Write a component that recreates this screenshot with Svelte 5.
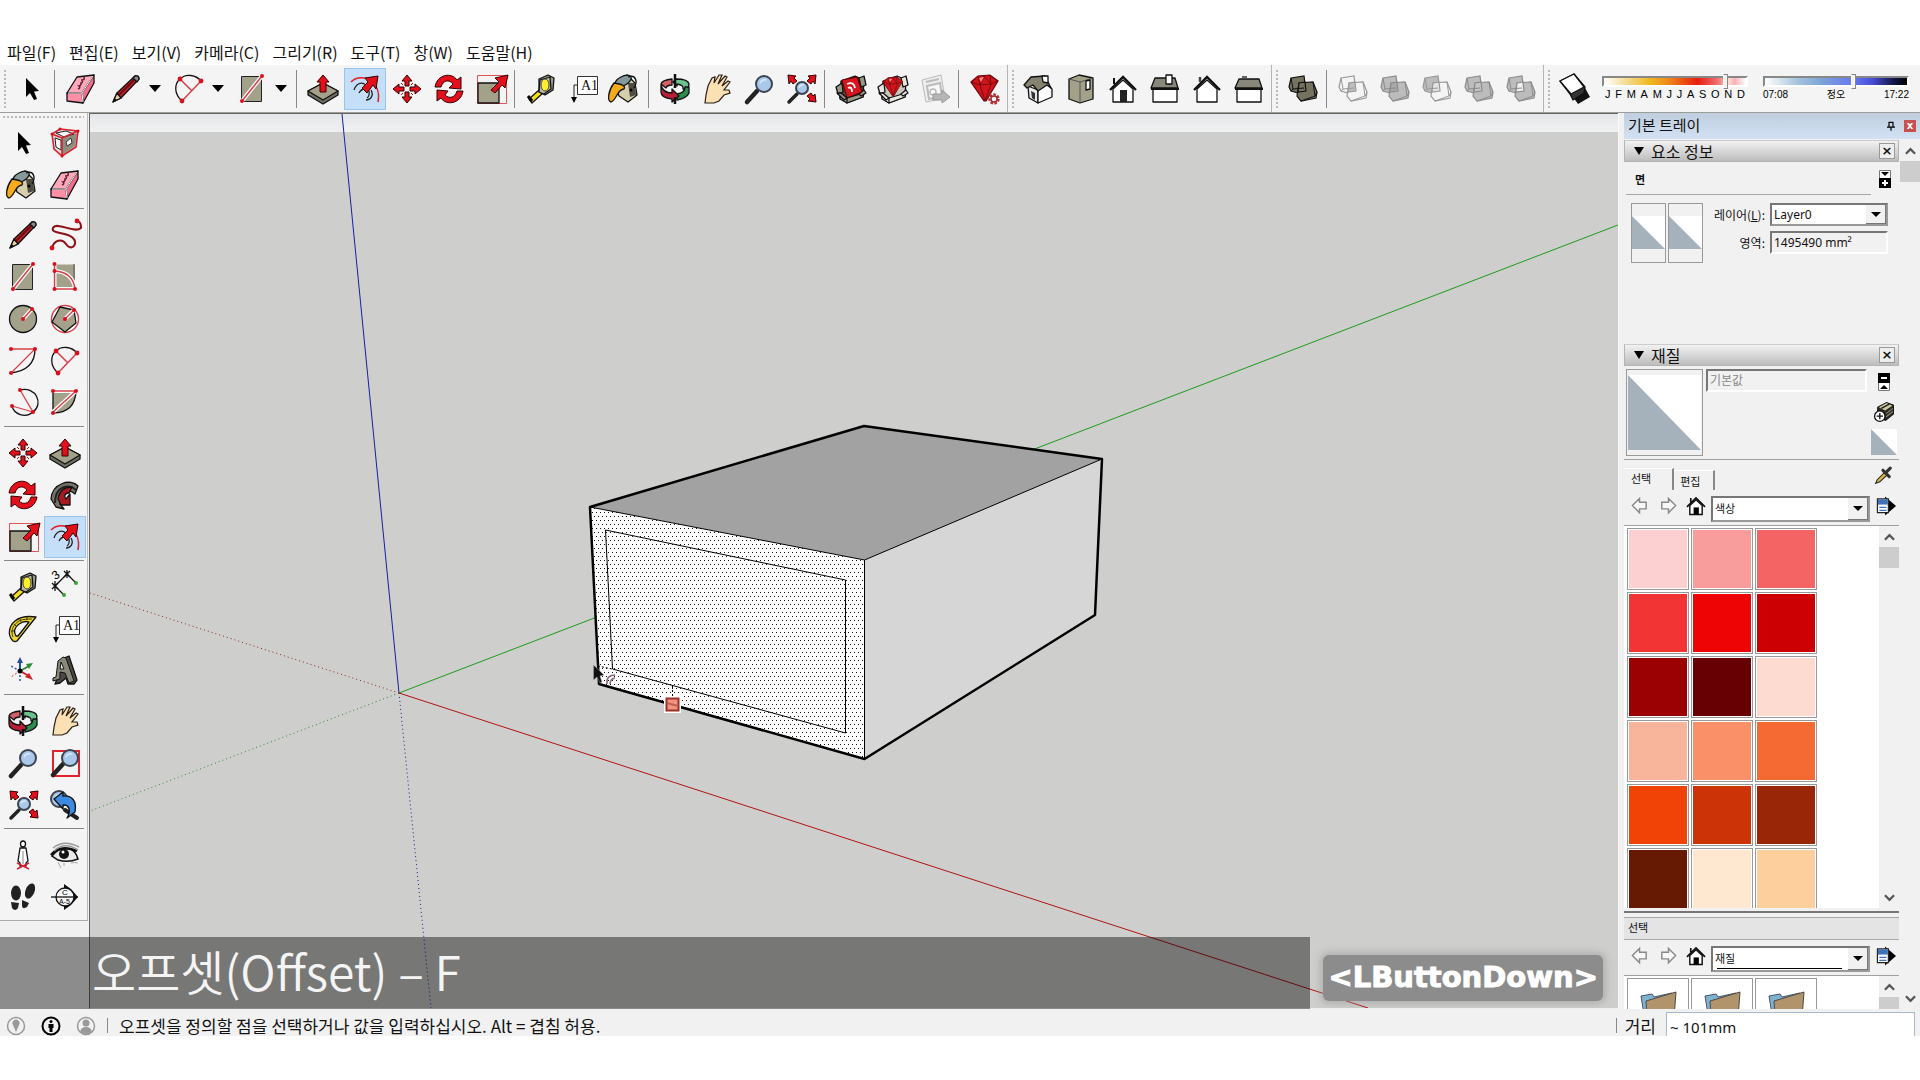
<script>
  const dot = (x, y, r = 2) => `<circle cx="${x}" cy="${y}" r="${r}" fill="#d8101c"/>`;
  const redLine = (d) =>
    `<path d="${d}" fill="none" stroke="#fff" stroke-width="4"/><path d="${d}" fill="none" stroke="#d8404a" stroke-width="1.5"/>`;
  const lens = (x, y, r) =>
    `<circle cx="${x}" cy="${y}" r="${r}" fill="#a9c8ea" stroke="#3c4450" stroke-width="2"/><path d="M${x - r * 0.5} ${y - r * 0.1}Q${x - r * 0.3} ${y - r * 0.6} ${x + r * 0.3} ${y - r * 0.5}" stroke="#dcebfa" stroke-width="1.5" fill="none"/>`;
  const red = 'fill="#e3101c" stroke="#300" stroke-width="1"';
  const ink = 'stroke="#111" stroke-width="1.3" stroke-linejoin="round"';
  const tan = 'fill="#a3a18a"';
  const bigArrow = 'M21 22L29 14L25 10L38 7L35 20L32 17L25 25Z';
  const handShape =
    'M9 35L10 27L12 18L16 10L19 9L18 15L23 7L26 7L22 16L29 8L31 9L26 18L32 13L34 14L28 22L33 22L34 25L28 27L23 33L18 35Z';
  const crate = (inside, body, shade) =>
    `<path d="M11 13L25 8L34 12L33 29L17 35L10 30Z" fill="${shade}" ${ink}/><path d="M6 19L12 15L13 24L8 26ZM29 10L34 8L36 17L31 19Z" fill="${body}" ${ink}/>${inside}<path d="M10 27L17 30L34 25L33 29L17 35L10 31Z" fill="${body}" ${ink}/><path d="M17 30V35" ${ink}/><path d="M7 25L11 25L17 30L14 32ZM34 22L36 25L31 28L29 26Z" fill="${body}" ${ink}/>`;
  const gem = (dx, dy, s) =>
    `<g transform="translate(${dx} ${dy}) scale(${s})"><path d="M7 14L14 8L26 7L34 13L22 33L20 33Z" fill="#d0141c" stroke="#6a0508" stroke-width="1.2"/><path d="M7 14L16 17L27 16L34 13M16 17L21 33L27 16L20 8L16 17M14 8L16 17M26 7L27 16" stroke="#7a0a0d" fill="none"/><path d="M15 10L20 9L17 14Z" fill="#ff8a8a"/></g>`;
  const solids = (a, b, mid, line) =>
    `<path d="M9 10L22 8L24 23L20 26L9 23L7 19Z" fill="${a}" stroke="${line}" stroke-width="1.2"/><path d="M17 15L31 14L35 24L34 30L19 33L15 28Z" fill="${b}" stroke="${line}" stroke-width="1.2"/><path d="M17 15L23 14L24 23L16 24Z" fill="${mid}" stroke="${line}" stroke-width="1.2"/><path d="M31 14L33 28L19 33M33 28L35 24M9 10L11 21L22 20M11 21L9 23" fill="none" stroke="${line}"/>`;
  const house = (extra) =>
    `<path d="M11 21L21 12L31 21V34H11Z" fill="#fff" ${ink}/><path d="M8 22L21 9L34 22" fill="none" stroke="#111" stroke-width="2.4"/>${extra}`;

  const icons = {
    select: '<path d="M16 10V29L20 25L24 32L27 31L24 23.500L29 23Z" fill="#000"/>',
    component: `<path d="M8 12L16 7L34 9L32 25L18 34L10 27Z" fill="#ddd"/><path d="M18 16L33 11L31 24L18 33Z" fill="#8f8e7e"/><path d="M12 11L22 9L30 12L20 15Z" fill="#fff" stroke="#222"/><path d="M11 16L17 18V28L12 25Z" fill="#fff" stroke="#222"/><path d="M22 20L27 16L28 21L23 24Z" fill="#fff" stroke="#333"/><path d="M8 12L16 7L34 9L32 25L18 34L10 27ZM8 12L18 16L34 9M18 16V34" fill="none" stroke="#d8202c" stroke-width="1.600"/>${dot(8, 12, 1.5)}${dot(34, 9, 1.5)}${dot(18, 34, 1.5)}${dot(16, 7, 1.5)}`,
    paint: `<path d="M11 15L23 7L31 15L33 27L24 34L15 28Z" fill="#d6cfae" ${ink}/><path d="M24 15L31 15L32 27L26 29Z" fill="#4e4b42"/><ellipse cx="19" cy="13" rx="9" ry="4.500" transform="rotate(-28 19 13)" fill="#87989c" ${ink}/><path d="M24 9C32 6 34 14 30 20" fill="none" ${ink}/><path d="M10 15C18 16 22 18 20 21C13 21 13 32 7 34C3 33 4 23 10 15Z" fill="#f5ab1b" ${ink}/><circle cx="27" cy="22" r="1.500" fill="#000"/>`,
    eraser: `<path d="M7 25L17 9L34 7L22 25Z" fill="#ffa9bb" ${ink}/><path d="M22 25L34 7V15L23 35Z" fill="#f06d8b" ${ink}/><path d="M7 25L22 25L23 35L7 33Z" fill="#ff8fa6" ${ink}/><path d="M8 25H22L33 8M22 25L23 34" stroke="#fff" fill="none"/><path d="M18 21q3-1 1-3q2 0 2-3q2 0 1-3q3 0 2-3" stroke="#5f2633" stroke-width="1.600" fill="none"/>`,
    pencil: `<path d="M8 34L12 25L30 8Q34 7 34 11L16 30Z" fill="#c2242a" ${ink}/><path d="M14 27L31 10" stroke="#6e0d12" stroke-width="2"/><path d="M8 34L12 25L16 30Z" fill="#e9d3a2" ${ink}/><path d="M8 34L9.500 30L12 32Z" fill="#111"/><path d="M28 10L30 8Q34 7 34 11L32 14Z" fill="#888" ${ink}/>`,
    freehand: `<path d="M8 34C10 26 18 24 22 30C27 38 35 30 29 24C24 18 6 20 9 14C13 7 30 20 37 14C37 9 36 8 33 7" fill="none" stroke="#8e1118" stroke-width="2"/>${dot(8, 34, 2.4)}${dot(33, 7, 2.4)}`,
    rect: `<path d="M10.500 8.500H30.500V33.500H10.500Z" ${tan} stroke="#222"/>${redLine('M11 33L31 8')}${dot(11, 33)}${dot(31, 8)}`,
    rotrect: `<path d="M10.500 8.500H31V33H10.500Z" ${tan}/><path d="M30 8V28" stroke="#555"/>${redLine('M10.500 8V33H31Q29 16 10.500 15')}${dot(10.5, 8)}${dot(10.5, 15)}${dot(10.5, 33)}${dot(31, 33)}`,
    circle: `<circle cx="21" cy="21" r="13.500" ${tan} ${ink}/>${redLine('M21 21L30 11')}${dot(21, 21)}${dot(30, 11)}`,
    polygon: `<circle cx="21" cy="21" r="13.500" fill="#fff" stroke="#d84048" stroke-width="1.400"/><path d="M16 9L30 12L32 25L21 34L8 24Z" ${tan} ${ink}/>${redLine('M21 21L30 12')}${dot(21, 21)}${dot(30, 12)}`,
    arc1: `<path d="M33 9Q33 30 9 33" fill="none" ${ink}/><path d="M9 9H33L9 33" fill="none" stroke="#d8404a" stroke-width="1.300"/>${dot(9, 9)}${dot(33, 9)}${dot(9, 33)}`,
    arc2: `<path d="M14 33C6 26 6 16 12 11C18 5 28 7 33 13" fill="none" ${ink}/><path d="M14 33L33 13M12 11L24 23" stroke="#d8404a" stroke-width="1.500"/>${dot(14, 33, 2.4)}${dot(12, 11, 2.4)}${dot(33, 13, 2.4)}`,
    arc3: `<path d="M18 8C34 4 42 22 31 30C23 37 12 32 10 24" fill="none" ${ink}/><path d="M18 8L31 30L10 24" fill="none" stroke="#d8404a" stroke-width="1.300"/>${dot(18, 8)}${dot(10, 24)}${dot(31, 30)}`,
    pie: `<path d="M9 9H32Q31 31 9 31Z" ${tan} ${ink}/>${redLine('M9 9H32L9 30')}${dot(9, 9)}${dot(32, 9)}${dot(9, 31)}`,
    move: `<path d="M21 7L26 13H23V18H19V13H16ZM21 35L26 29H23V24H19V29H16ZM7 21L13 16V19H18V23H13V26ZM35 21L29 16V19H24V23H29V26Z" ${red}/><path d="M17 17L15 15M25 17L27 15M17 25L15 27M25 25L27 27" stroke="#d00"/>`,
    push: `<path d="M6 23L21 15L36 23V27L21 36L6 27Z" fill="#6f6e60" ${ink}/><path d="M6 23L21 15L36 23L21 32Z" ${tan} ${ink}/><path d="M21 7L27 14H24V24H18V14H15Z" ${red}/>`,
    rotate: `<path d="M7 19C9 6 24 4 29 12L33 9V21L21 20L25 16C21 11 15 12 13 19Z" ${red}/><path d="M35 23C33 36 18 38 13 30L9 33V22L20 23L17 27C21 31 27 30 29 23Z" ${red}/>`,
    follow: `<path d="M7 25C8 9 27 4 34 12L31 20C25 14 17 18 16 30L20 35L12 33Z" fill="#77756a" ${ink}/><path d="M11 29C11 12 25 9 32 16" stroke="#222" stroke-width="2" fill="none"/><path d="M14 25C16 13 25 13 28 13L25 19C20 19 20 23 22 25L26 20V31H17Z" fill="#a91a20" ${ink}/>`,
    scale: `<path d="M7.500 7.500H36.500V35.500H7.500Z" fill="none" stroke="#e0555c"/><path d="M8 15H29V35H8Z" ${tan} ${ink}/><path d="${bigArrow}" ${red}/>`,
    offset: `<path d="M7 14C17 4 38 12 34 34" fill="none" stroke="#e2202c" stroke-width="1.600"/><path d="M10 22C12 16 17 13 22 17M27 22C30 27 27 32 22 32M15 25Q17 21 21 21M25 23Q26 28 23 30" fill="none" stroke="#222" stroke-width="1.300"/><path d="M18 20L24 14L21 10L34 8L32 21L29 17L23 25Z" ${red}/>`,
    tape: `<path d="M9 31L19 22L23 25L12 35Z" fill="#f2df1c" ${ink}/><path d="M8 28L12 33" stroke="#000" stroke-width="3"/><path d="M19 11L28 7L34 10L33 22L25 27L19 24Z" fill="#9b9b8b" ${ink}/><path d="M20 12L30 9L31 21L24 26L19 24Z" fill="#b8b8aa" ${ink}/><ellipse cx="25" cy="17" rx="4" ry="6" fill="#ffef2c" stroke="#444"/>`,
    dimension: `<path d="M11 20L23 8M11 20L20 29M23 8L32 17" ${ink}/><path d="M8 17L14 23M8 23L14 17M11 15V25M20 5L26 11M20 11L26 5M23 4V12" ${ink}/><circle cx="20" cy="29" r="2" fill="#39a33c"/><circle cx="32" cy="17" r="2" fill="#39a33c"/><text x="9" y="13" transform="rotate(-35 12 10)" font-family="Liberation Sans" font-size="12">3</text>`,
    protractor: `<path d="M11 33C5 27 7 18 13 13C19 8 27 8 34 9L15 33Q13 34 11 33Z" fill="#f0d92a" ${ink}/><path d="M14 28C11 23 13 19 17 16C20 14 24 13 27 14L16 28Z" fill="#f4f4f4" ${ink}/><path d="M11 29C8 22 12 16 17 13C21 11 26 11 30 11M9 23L12 23M12 16L14 18M18 11L19 14M25 9L25 12" fill="none" stroke="#443c00"/>`,
    text: `<path d="M15.500 8.500H35.500V26.500H15.500Z" fill="#fff" stroke="#333"/><text x="19" y="22" font-family="Liberation Serif" font-size="14" fill="#111">A1</text><path d="M15 17H12V32" fill="none" stroke="#222"/><path d="M9 29H15L12 35Z" fill="#000"/>`,
    axes: `<path d="M18 21V33M18 21L9 16" stroke="#3157a0" stroke-dasharray="2 2" stroke-width="1.500"/><path d="M18 21L9 27" stroke="#c33" stroke-dasharray="2 2"/><path d="M18 21V12" stroke="#234f9c" stroke-width="2"/><path d="M15 13L18 7L21 13Z" fill="#234f9c"/><path d="M18 21L27 16" stroke="#2f8c38" stroke-width="2"/><path d="M24 14L31 13L27 19Z" fill="#2f8c38"/><path d="M18 21L27 26" stroke="#d31c24" stroke-width="2"/><path d="M27 23L31 30L23 27Z" fill="#d31c24"/><circle cx="18" cy="21" r="2.500"/>`,
    text3d: `<path d="M13 29L20 8L25 6L33 30L30 34L24 34L22 28L16 33L11 34Z" fill="#4c4a42" ${ink}/><path d="M9 28L12 27L14 11L19 7L22 8L30 31L25 33L21 23L16 22L16 29L9 31Z" fill="#8a887a" stroke="#111"/><path d="M17 12L16 19L20 19Z" fill="#eee" stroke="#111"/>`,
    orbit: `<path d="M7 16Q8 12 18 11V17Q13 17 12 20Z" fill="#d26068" ${ink}/><path d="M35 16Q34 11 22 11L19 14L23 18V16Q30 17 29 21H34Z" fill="#6cc08b" ${ink}/><path d="M35 19V25Q33 30 23 32V26Q31 25 31 19Z" fill="#2c8d4d" ${ink}/><path d="M7 17Q9 25 18 25V21L25 28L18 34V31Q7 30 7 24Z" fill="#b81e35" ${ink}/><path d="M21 6V20M21 29V36" stroke="#111" stroke-width="2.500"/>`,
    pan: `<path d="${handShape}" fill="#fbe0b4" stroke="#2c2015" stroke-width="1.200"/>`,
    zoom: `<path d="M9 34L19 23" stroke="#222" stroke-width="4.500" stroke-linecap="round"/>${lens(26, 16, 8)}`,
    zoomwin: `<path d="M9 9H35V34H9Z" fill="none" stroke="#e0222c" stroke-width="2"/><path d="M9 33L19 22" stroke="#222" stroke-width="4.500" stroke-linecap="round"/>${lens(26, 16, 8)}`,
    extents: `<path d="M9 34L17 26" stroke="#222" stroke-width="3.500" stroke-linecap="round"/>${lens(22, 20, 6)}<path d="M8 7L16 8L14 10L17 13L13 16L11 13L9 16ZM36 7L28 8L30 10L27 13L31 16L33 13L35 16ZM36 34L28 33L30 31L27 28L31 25L33 28L35 26Z" ${red}/>`,
    previous: `${lens(15, 15, 8)}<path d="M21 26L33 34" stroke="#222" stroke-width="4" stroke-linecap="round"/><path d="M10 15L19 8V12C28 11 33 17 31 28L23 34C28 26 24 20 19 21V25Z" fill="#3c8be0" ${ink}/>`,
    position: `<ellipse cx="21" cy="10" rx="2.500" ry="3" fill="#fff" ${ink}/><path d="M18 14H24L26 27L24 29V32H18V29L16 27Z" fill="#fff" ${ink}/><path d="M21 17V30" stroke="#888"/><path d="M15 35L27 29M15 29L27 35" stroke="#d8202c" stroke-width="1.400"/>`,
    look: `<path d="M8 22Q16 12 27 15Q32 18 34 25Q24 29 14 26Z" fill="#e9e9e9" stroke="#111" stroke-width="1.500"/><path d="M7 21Q16 10 33 17" fill="none" stroke="#111" stroke-width="2.500"/><circle cx="20" cy="20" r="5" fill="#111"/><circle cx="19" cy="18" r="1.500" fill="#fff"/><path d="M9 14Q20 5 35 13M10 17Q20 7 34 16" fill="none" stroke="#999" stroke-width="1.500"/><path d="M14 28L17 34M20 29L20 32M27 29Q31 28 34 29" fill="none" stroke="#aaa"/>`,
    walk: `<ellipse cx="14" cy="17" rx="5" ry="7.500" fill="#222"/><path d="M9 26L17 27L16 32Q13 36 10 32Z" fill="#222"/><ellipse cx="28" cy="15" rx="4.500" ry="8" transform="rotate(22 28 15)" fill="#222"/><path d="M20 24L27 27L25 31Q20 34 20 29Z" fill="#222"/>`,
    section: `<path d="M20 8L27 13L34 21L27 29L20 34Z" fill="#111"/><circle cx="21" cy="21" r="9" fill="#f7f7f7" ${ink}/><path d="M7 21H34" ${ink}/><text x="18" y="19" font-family="Liberation Sans" font-size="8">C</text><text x="15" y="28" font-family="Liberation Sans" font-size="7">A-5</text>`,
    warehouse: crate('<path d="M12 12L27 9L32 24L17 30Z" fill="#d8151e" stroke="#600"/><path d="M17 16Q24 13 25 20M18 20Q22 18 22 24" stroke="#fff" stroke-width="1.800" fill="none"/>', '#9a9685', '#4b483d'),
    extwarehouse: crate(gem(6, 4, 0.72), '#e8e6df', '#c9c6bb'),
    sendlayout: `<path d="M8 12L27 7L31 30L12 34Z" fill="#eee" stroke="#bbb"/><path d="M12 14L25 11M13 18L26 15L28 28L15 31Z" stroke="#bbb" stroke-width="2" fill="#f8f8f8"/><circle cx="19" cy="24" r="3" stroke="#bbb" fill="none" stroke-width="1.500"/><path d="M19 26H28V22L36 29L28 35V32H19Z" fill="#b6b6b6" stroke="#999"/>`,
    extmanager: `${gem(0, 0, 1)}<circle cx="30" cy="31" r="4.500" fill="#f4f4f4" stroke="#c22a30" stroke-width="2.500" stroke-dasharray="2.500 1.500"/><circle cx="30" cy="31" r="3" fill="none" stroke="#a8262c" stroke-width="1.500"/>`,
    iso: `<path d="M10 18L20 22V35L11 30Z" fill="#e8e8e8" ${ink}/><path d="M20 22L28 15L34 21V29L20 35Z" fill="#fff" ${ink}/><path d="M6 17L13 9L27 8L33 20L29 17L20 23L15 17L9 20Z" fill="#85836f" ${ink}/><path d="M13 23L17 25V32L14 30Z" fill="#333"/><path d="M24 8H30V15L25 14Z" fill="#fff" ${ink}/>`,
    top: `<path d="M9 11L19 7L33 10V31L20 35L9 31Z" ${tan} ${ink}/><path d="M9 11L20 14L33 10M20 14V35" fill="none" stroke="#555"/><path d="M26 13L30 12V21L26 22Z" fill="#fff" ${ink}/>`,
    front: house('<path d="M18 22H25V34H18Z" fill="#222"/><path d="M12 10V16" stroke="#111" stroke-width="2"/>'),
    right: `<path d="M9 20H33V34H9Z" fill="#fff" ${ink}/><path d="M11 10H31L34 20H7Z" fill="#89877a" ${ink}/><path d="M7 21H35" stroke="#111" stroke-width="2"/><path d="M22 7H28V16H22Z" fill="#fff" ${ink}/>`,
    back: house('<path d="M14 9V14" stroke="#444" stroke-width="2.500"/>'),
    left: `<path d="M9 20H33V34H9Z" fill="#fff" ${ink}/><path d="M11 11H31L34 20H7Z" fill="#89877a" ${ink}/><path d="M7 21H35" stroke="#111" stroke-width="2"/><path d="M14 9H19" stroke="#666" stroke-width="2"/>`,
    outer: solids('#75725f', '#75725f', '#75725f', '#111'),
    intersect: solids('#f4f4f4', '#f4f4f4', '#bdbdbd', '#999'),
    union: solids('#bcbcbc', '#bcbcbc', '#a8a8a8', '#8c8c8c'),
    subtract: solids('#bcbcbc', '#f4f4f4', '#e4e4e4', '#999'),
    trim: solids('#bcbcbc', '#bcbcbc', '#c4c4c4', '#8c8c8c'),
    split: solids('#bcbcbc', '#bcbcbc', '#f0f0f0', '#8c8c8c'),
    shadow: `<path d="M17 26L31 20L36 29L24 36Z" fill="#111"/><path d="M6 13L20 6L31 19L30 25L19 32L16 26Z" fill="#333" ${ink}/><path d="M6 13L20 6L30 19L17 26Z" fill="#fff" ${ink}/>`,
    navback: '<path d="M5 20L20 5V13H34V27H20V35Z" fill="#f8f8f8" stroke="#888" stroke-width="3"/>',
    navnext: '<path d="M37 20L22 5V13H8V27H22V35Z" fill="#f8f8f8" stroke="#888" stroke-width="3"/>',
    home: '<path d="M8 20L21 8L34 20V39H8Z" fill="#fff" stroke="#111" stroke-width="3"/><path d="M2 23L21 4L40 23M10 4V13" fill="none" stroke="#111" stroke-width="3.500"/><path d="M16 24H27V39H16Z" fill="#000"/>',
    details: '<path d="M19 1L42 21L19 41Z" fill="#000"/><path d="M3 6H26V35H3Z" fill="#fff" stroke="#222" stroke-width="2.500"/><path d="M4 7H25V18H4Z" fill="#3f72b8"/><path d="M7 24H22M7 30H22" stroke="#3f72b8" stroke-width="2.500"/>',
    dropper: '<path d="M5 37L8 30L22 16L27 21L13 34Z" fill="#d9b34c" stroke="#222" stroke-width="2"/><path d="M19 12L31 24M24 17L33 8" stroke="#333" stroke-width="6" stroke-linecap="round"/>',
    newmat: '<path d="M9 12L26 3L39 8V25L24 37L9 30Z" fill="#2a2a24" stroke="#111" stroke-width="2"/><path d="M11 12L26 4L37 9L23 18Z" fill="#cfc9a0"/><path d="M16 14L31 6" stroke="#222" stroke-width="3"/><path d="M25 24L38 14M25 30L38 20" stroke="#8e8a70" stroke-width="2"/><circle cx="13" cy="29" r="10" fill="#fff" stroke="#111" stroke-width="2.500"/><path d="M7 29H19M13 23V35" stroke="#111" stroke-width="2.500"/>'
  };

  const topGroups = [
    [
      ['select', '선택'], '|', ['eraser', '지우개'], ['pencil', '선', true], ['arc2', '호', true], ['rect', '직사각형', true], '|',
      ['push', '밀기/끌기'], ['offset', '오프셋'], ['move', '이동'], ['rotate', '회전'], ['scale', '배율'], '|',
      ['tape', '줄자'], ['text', '텍스트'], ['paint', '페인트통'], '|',
      ['orbit', '궤도'], ['pan', '팬'], ['zoom', '확대/축소'], ['extents', '화면에 맞추기'], '|',
      ['warehouse', '3D Warehouse'], ['extwarehouse', 'Extension Warehouse'], ['sendlayout', 'LayOut으로 보내기'], '|',
      ['extmanager', '확장 관리자']
    ],
    [['iso', '등각투상'], ['top', '위'], ['front', '앞'], ['right', '오른쪽'], ['back', '뒤'], ['left', '왼쪽']],
    [['outer', '외부 쉘'], '|', ['intersect', '교차'], ['union', '결합'], ['subtract', '빼기'], ['trim', '트림'], ['split', '분할']]
  ];

  const sideGroups = [
    [['select', '선택'], ['component', '구성요소 만들기'], ['paint', '페인트통'], ['eraser', '지우개']],
    [['pencil', '선'], ['freehand', '자유곡선'], ['rect', '직사각형'], ['rotrect', '회전된 직사각형'], ['circle', '원'], ['polygon', '다각형'], ['arc1', '호'], ['arc2', '2점 호'], ['arc3', '3점 호'], ['pie', '파이']],
    [['move', '이동'], ['push', '밀기/끌기'], ['rotate', '회전'], ['follow', '따라가기'], ['scale', '배율'], ['offset', '오프셋']],
    [['tape', '줄자'], ['dimension', '치수'], ['protractor', '각도기'], ['text', '텍스트'], ['axes', '축'], ['text3d', '3D 텍스트']],
    [['orbit', '궤도'], ['pan', '팬'], ['zoom', '확대/축소'], ['zoomwin', '창 확대/축소'], ['extents', '화면에 맞추기'], ['previous', '이전']],
    [['position', '카메라 배치'], ['look', '둘러보기'], ['walk', '이동 시점'], ['section', '단면']]
  ];

  const menus = ['파일(F)', '편집(E)', '보기(V)', '카메라(C)', '그리기(R)', '도구(T)', '창(W)', '도움말(H)'];
  const months = [...'JFMAMJJASOND'];
  const swatches = [
    '#fccfd0', '#f99c9c', '#f46464', '#f23434', '#ee0404', '#cc0003', '#9b0003', '#660003', '#fddbd0',
    '#f9b49c', '#f99068', '#f56a33', '#f04305', '#cc3307', '#992606', '#661a03', '#ffe7d0', '#fccf9c'
  ];

  let layer = $state('Layer0');
  let collection = $state('색상');
  let library = $state('재질');
  let distance = $state('~ 101mm');
  let month = $state(87);
  let hour = $state(63);
</script>

{#snippet icon(name)}
  <svg class="icon" viewBox="0 0 42 42" aria-hidden="true">{@html icons[name]}</svg>
{/snippet}

{#snippet chevron(down)}
  <svg class="chevron" viewBox="0 0 12 8" aria-hidden="true">
    <path d={down ? 'M1 1L6 6L11 1' : 'M1 7L6 2L11 7'} fill="none" stroke="#555" stroke-width="2.4" />
  </svg>
{/snippet}

{#snippet scrollbar(end)}
  <div class="scroll">
    <button class="scroll-btn" aria-label="위로 스크롤">{@render chevron(false)}</button>
    <div class="thumb"></div>
    {#if end}<button class="scroll-btn last" aria-label="아래로 스크롤">{@render chevron(true)}</button>{/if}
  </div>
{/snippet}

{#snippet faceSwatch()}
  <svg class="face" viewBox="0 0 10 10" preserveAspectRatio="none" aria-hidden="true">
    <path d="M0 0H10V10H0Z" fill="#fff" /><path d="M0 0L10 10H0Z" fill="#a5b2bc" />
  </svg>
{/snippet}

{#snippet navButtons()}
  <button class="nav" aria-label="뒤로">{@render icon('navback')}</button>
  <button class="nav" aria-label="앞으로">{@render icon('navnext')}</button>
  <button class="nav" aria-label="모델에서">{@render icon('home')}</button>
{/snippet}

<div class="app">
  <nav class="menu" aria-label="메뉴">
    {#each menus as item}<button>{item}</button>{/each}
  </nav>

  <header class="toolbar">
    {#each topGroups as group}
      <div class="group">
        {#each group as tool}
          {#if tool === '|'}
            <span class="sep"></span>
          {:else if tool[2]}
            <span class="split" class:first={tool[0] === 'pencil'}>
              <button class="tool" aria-label={tool[1]}>{@render icon(tool[0])}</button>
              <button class="drop" aria-label={tool[1] + ' 옵션'}><i class="tri"></i></button>
            </span>
          {:else}
            <button class="tool" class:active={tool[0] === 'offset'} aria-label={tool[1]}>{@render icon(tool[0])}</button>
          {/if}
        {/each}
      </div>
    {/each}
    <div class="group sun">
      <button class="tool" aria-label="그림자 표시">{@render icon('shadow')}</button>
      <div class="slider">
        <input class="month" type="range" aria-label="날짜" bind:value={month} />
        <div class="ticks">{#each months as m}<span>{m}</span>{/each}</div>
      </div>
      <div class="slider">
        <input class="hour" type="range" aria-label="시간" bind:value={hour} />
        <div class="ticks times"><span>07:08</span><span>정오</span><span>17:22</span></div>
      </div>
    </div>
  </header>

  <main>
    <aside class="side">
      <div class="tools">
        {#each sideGroups as group}
          <div class="pair">
            {#each group as tool}
              <button class="tool" class:active={tool[0] === 'offset'} aria-label={tool[1]}>{@render icon(tool[0])}</button>
            {/each}
          </div>
        {/each}
      </div>
    </aside>

    <section class="view" aria-label="모델">
      <svg class="scene" viewBox="90 114 1528 894" preserveAspectRatio="xMidYMid slice">
        <defs>
          <pattern id="dots" width="4" height="8" patternUnits="userSpaceOnUse">
            <path d="M0 0H1V1H0ZM2 4H3V5H2Z" fill="#111" />
          </pattern>
          <linearGradient id="sky" x1="0" y1="0" x2="0" y2="1">
            <stop offset="0" stop-color="#e4e7ea" /><stop offset="1" stop-color="#f0f1f1" />
          </linearGradient>
        </defs>
        <path d="M90 114H1618V1008H90Z" fill="#cececc" />
        <path d="M90 114H1618V132H90Z" fill="url(#sky)" />
        <g fill="none" stroke-width="1">
          <path d="M342 114L399 693" stroke="#1c1ca8" />
          <path d="M399 693L1618 225" stroke="#1e9c1e" />
          <path d="M399 693L1368 1008" stroke="#b01414" />
          <g stroke-dasharray="1 3">
            <path d="M399 693L431 1008" stroke="#1c1c9c" />
            <path d="M399 693L90 811" stroke="#2f8c2f" />
            <path d="M399 693L90 593" stroke="#a01c1c" />
          </g>
        </g>
        <path d="M590 507L864 426L1102 459L865 560Z" fill="#a2a2a2" />
        <path d="M865 560L1102 459L1095 615L864.500 759Z" fill="#d6d6d6" />
        <path d="M590 507L864.500 560V759L599 684Z" fill="#fff" />
        <path d="M590 507L864.500 560V759L599 684Z" fill="url(#dots)" />
        <path d="M590 507L864.500 560V759M864.500 560L1102 459M605.500 530L845.500 580V733L612.500 669Z" fill="none" stroke="#000" />
        <path d="M598 666L612 669M672.500 686V704" fill="none" stroke="#000" stroke-dasharray="2 2" />
        <path d="M599 684L590 507L864 426L1102 459L1095 615L864.500 759Z" fill="none" stroke="#000" stroke-width="2.500" stroke-linejoin="round" />
        <path d="M664 696H681V713H664Z" fill="#fff" />
        <path d="M666.500 698.500H678.500V710.500H666.500Z" fill="#f09484" stroke="#9c2f26" stroke-width="2" />
        <path d="M667 703L678 706" stroke="#c4604e" stroke-width="2" />
        <path d="M607 684Q606 675 615 675M610 684Q610 679 615 678" fill="none" stroke="#86687c" stroke-width="1.500" />
        <path d="M593.500 665V680L597 677L600 683L602 682L600 676L604 675Z" fill="#111" stroke="#aaa" stroke-width=".5" />
      </svg>
      <div class="keycast">&lt;LButtonDown&gt;</div>
    </section>

    <aside class="tray">
      <header class="tray-title">
        <h2>기본 트레이</h2>
        <button class="pin" aria-label="고정">
          <svg viewBox="0 0 10 12"><path d="M2.500 1V7M7.500 1V7M2 1.500H8M0 7.500H10M5 8V12" fill="none" stroke="#000" stroke-width="1.500" /></svg>
        </button>
        <button class="close" aria-label="닫기">x</button>
      </header>
      <div class="tray-body">
        <div class="panels">
          <section class="entity">
            <header class="panel-head"><i class="tri"></i><h3>요소 정보</h3><button class="x" aria-label="요소 정보 닫기">×</button></header>
            <div class="entity-kind">
              <b>면</b>
              <button class="expand" aria-label="자세히">
                <svg viewBox="0 0 12 18"><path d="M.5 .5H11.500V17.500H.5Z" fill="#fff" stroke="#777" /><path d="M2 2H10L6 6Z" /><path d="M0 8H12V18H0Z" /><path d="M6 10V16M3 13H9" stroke="#fff" stroke-width="2" /></svg>
              </button>
            </div>
            <div class="entity-info">
              <div class="face-card">{@render faceSwatch()}</div>
              <div class="face-card">{@render faceSwatch()}</div>
              <div class="fields">
                <label for="layer">레이어(<u>L</u>):</label>
                <span class="combo">
                  <select id="layer" bind:value={layer}><option>Layer0</option></select><i class="cap"><i class="tri"></i></i>
                </span>
                <label for="area">영역:</label>
                <input id="area" class="sunken" readonly value="1495490 mm²" />
              </div>
            </div>
          </section>

          <section class="materials">
            <header class="panel-head"><i class="tri"></i><h3>재질</h3><button class="x" aria-label="재질 닫기">×</button></header>
            <div class="material-top">
              <div class="preview">{@render faceSwatch()}</div>
              <input class="sunken name" aria-label="재질 이름" placeholder="기본값" disabled />
              <div class="stack">
                <button class="expand" aria-label="보조 창">
                  <svg viewBox="0 0 12 18"><path d="M.5 .5H11.500V17.500H.5Z" fill="#fff" stroke="#777" /><path d="M2 16H10L6 12Z" /><path d="M0 0H12V10H0Z" /><path d="M3 5H9" stroke="#fff" stroke-width="2" /></svg>
                </button>
                <button class="small" aria-label="재질 만들기">{@render icon('newmat')}</button>
                <button class="reset" aria-label="기본 재질">{@render faceSwatch()}</button>
              </div>
            </div>
            <div class="tabs">
              <button class="tab current">선택</button><button class="tab">편집</button>
              <button class="small dropper" aria-label="재질 샘플링">{@render icon('dropper')}</button>
            </div>
            <div class="browse">
              {@render navButtons()}
              <span class="combo tall">
                <select aria-label="재질 모음" bind:value={collection}><option>색상</option></select><i class="cap"><i class="tri"></i></i>
              </span>
              <button class="nav" aria-label="세부정보">{@render icon('details')}</button>
            </div>
            <div class="list">
              <div class="grid">
                {#each swatches as color}<button class="swatch" aria-label={color} style:--fill={color}></button>{/each}
              </div>
              {@render scrollbar(true)}
            </div>
            <div class="split-bar"></div>
            <div class="second">선택</div>
            <div class="browse">
              {@render navButtons()}
              <span class="combo tall lined">
                <select aria-label="라이브러리" bind:value={library}><option>재질</option></select><i class="cap"><i class="tri"></i></i>
              </span>
              <button class="nav" aria-label="세부정보">{@render icon('details')}</button>
            </div>
            <div class="list short">
              <div class="grid">
                {#each [1, 2, 3] as n}
                  <button class="folder" aria-label={'폴더 ' + n}>
                    <svg viewBox="0 0 60 60">
                      <path d="M13 17L24 15L26 18L44 14V54H19Z" fill="#7fb2d0" stroke="#456" />
                      <path d="M18 22L48 13L45 52L20 56Z" fill="#b2946c" stroke="#4a4a4a" />
                    </svg>
                  </button>
                {/each}
              </div>
              {@render scrollbar(false)}
            </div>
          </section>
        </div>
        {@render scrollbar(true)}
      </div>
    </aside>

    <div class="caption">오프셋(Offset) – F</div>
  </main>

  <footer>
    <button class="status-icon" aria-label="위치"><svg viewBox="0 0 20 20"><circle cx="10" cy="10" r="8.500" fill="none" stroke="#999" stroke-width="1.500" /><path d="M10 16L7 9A3.500 3.500 0 1 1 13 9Z" fill="#999" /></svg></button>
    <button class="status-icon" aria-label="저작권"><svg viewBox="0 0 20 20"><circle cx="10" cy="10" r="8.500" fill="none" stroke="#000" stroke-width="2" /><circle cx="10" cy="5.500" r="1.500" /><path d="M7.500 8H12.500V12H11.500V16H8.500V12H7.500Z" /></svg></button>
    <button class="status-icon" aria-label="로그인"><svg viewBox="0 0 20 20"><circle cx="10" cy="10" r="8.500" fill="none" stroke="#999" stroke-width="1.500" /><circle cx="10" cy="7" r="3.500" fill="#999" /><path d="M4 16Q5 11 10 11Q15 11 16 16Q10 20 4 16Z" fill="#999" /></svg></button>
    <span class="rule"></span>
    <p>오프셋을 정의할 점을 선택하거나 값을 입력하십시오. Alt = 겹침 허용.</p>
    <span class="rule"></span>
    <label for="vcb">거리</label>
    <input id="vcb" bind:value={distance} />
  </footer>
</div>

<style>
  :global(body) { background: #fff; }
  .app {
    box-sizing: border-box; min-height: 100vh; padding: 42px 0 44px;
    display: flex; flex-direction: column; color: #111;
    font-family: "Noto Sans", "Noto Sans CJK KR", sans-serif; font-size: 14px;
  }
  .app *, .app *::before { box-sizing: border-box; }
  button { border: 0; padding: 0; margin: 0; background: none; color: inherit; font: inherit; display: block; flex: none; }
  h2, h3, p { margin: 0; font-weight: 400; }
  svg { display: block; }

  .menu { display: flex; align-items: center; gap: 13px; height: 23px; padding: 0 0 4px 7px; }
  .menu button { font: 16px/20px "Noto Sans CJK KR", sans-serif; }

  .toolbar { display: flex; height: 48px; background: #f4f4f4; border-bottom: 1px solid #9c9c98; }
  .group { display: flex; align-items: center; padding: 0 1px 0 10px; border-right: 1px solid #b4b4b4; position: relative; }
  .group::before { content: ""; position: absolute; left: 4px; top: 5px; bottom: 3px; width: 2px; background: repeating-linear-gradient(#bbb 0 2px, transparent 2px 4px); }
  .group.sun { flex: 1; border-right: 0; }
  .sep { width: 1px; height: 38px; margin: 0 5px 0 2px; background: #888; }
  .tool { width: 42px; height: 42px; }
  .tool.active { background: #c5dff8; box-shadow: inset 0 0 0 1px #98c4ee; }
  .icon { width: 100%; height: 100%; }
  .split { display: flex; }
  .split.first { margin-left: 3px; }
  .drop { width: 21px; height: 42px; padding-left: 2px; }
  .tri { display: block; width: 0; border: 6px solid transparent; border-top: 7px solid #000; border-bottom: 0; }
  .slider { width: 146px; margin: 0 9px 0 6px; display: flex; flex-direction: column; }
  input[type="range"] { appearance: none; width: 100%; height: 11px; margin: 0; border: 2px solid #888; border-right-color: #fff; border-bottom-color: #fff; }
  .month { background: linear-gradient(90deg, #fff, #f6e0a0 14%, #eeb920 32%, #f08a18 45%, #e81c10 66%, #f07070 80%, #fdc 88%, #f8b0b8 92%, #fff); }
  .hour { background: linear-gradient(90deg, #fff, #a8c6dc 22%, #7ba4d8 40%, #6878f0 62%, #4a50d8 75%, #16184c 90%, #000); }
  input[type="range"]::-webkit-slider-thumb { appearance: none; width: 5px; height: 15px; background: #f4f4f4; border: 1px solid #888; border-left-color: #fff; }
  .ticks { display: flex; justify-content: space-between; padding: 1px 3px 0; font: 11px/13px "Liberation Sans", "Noto Sans CJK KR", sans-serif; color: #000; }
  .ticks.times { padding: 1px 0 0; font-size: 10px; }

  main { flex: 1; display: flex; position: relative; min-height: 0; background: #f1f1f1; }
  .side { width: 89px; flex: none; }
  .tools { padding: 9px 2px 0; width: 88px; background: #f4f4f4; border-right: 1px solid #bbb; border-bottom: 1px solid #aaa; position: relative; }
  .tools::before { content: ""; position: absolute; left: 3px; right: 3px; top: 3px; height: 2px; background: repeating-linear-gradient(90deg, #bbb 0 2px, transparent 2px 4px); }
  .pair { display: grid; grid-template-columns: 42px 42px; padding-bottom: 2px; }
  .pair + .pair { padding-top: 6px; background: linear-gradient(#888, #888) 2px 0 / 80px 1px no-repeat; }

  .view { flex: 1; min-width: 0; position: relative; border: 1px solid #666; border-right: 0; border-bottom: 1px solid #eee; overflow: hidden; background: #cececc; }
  .scene { position: absolute; inset: 0; width: 100%; height: 100%; }
  .keycast {
    position: absolute; right: 15px; bottom: 7px; padding: 0 5px 2px; border-radius: 6px;
    background: #8c8c8c; color: #fff; box-shadow: 0 0 6px 3px rgba(150, 150, 150, .5);
    font: bold 29px/44px "DejaVu Sans", sans-serif; -webkit-text-stroke: 1px #fff;
  }
  .caption {
    position: absolute; left: 0; bottom: 0; width: 68.250%; height: 72px; padding-left: 92px;
    background: rgba(0, 0, 0, .42); color: #f4f4f4; font: 350 48px/66px "Noto Sans CJK KR", sans-serif;
  }

  .tray { width: 302px; flex: none; padding-left: 5px; display: flex; flex-direction: column; border-left: 1px solid #fafafa; background: #f1f1f1; }
  .tray-title { display: flex; align-items: center; height: 26px; padding: 0 4px 1px 4px; gap: 9px; background: linear-gradient(#c0cede, #d2e2f4); }
  .tray-title h2 { flex: 1; font: 15px/20px "Noto Sans CJK KR", sans-serif; padding-bottom: 2px; }
  .pin svg { width: 8px; height: 10px; }
  .close { width: 12px; height: 12px; background: #c75050; color: #fff; font: bold 10px/10px "DejaVu Sans", sans-serif; }
  .tray-body { flex: 1; min-height: 0; display: flex; padding-top: 1px; }
  .panels { flex: 1; display: flex; flex-direction: column; min-height: 0; margin-right: 1px; }
  .panel-head { display: flex; align-items: center; height: 22px; padding: 0 3px 1px 9px; border: 1px solid #b4b4b4; border-top-color: #ccc; background: linear-gradient(#f2f2f2, #bdbdbd); }
  .panel-head .tri { border-width: 8px 5px 0; }
  .panel-head h3 { flex: 1; padding-left: 7px; font: 16px/20px "Noto Sans CJK KR", sans-serif; }
  .x { width: 16px; height: 16px; border: 1px solid #999; background: #eee; font: bold 13px/13px "DejaVu Sans", sans-serif; }
  .entity { height: 204px; font: 11px/14px "Noto Sans CJK KR", sans-serif; }
  .entity-kind { display: flex; justify-content: space-between; align-items: center; height: 33px; padding: 0 8px 0 11px; background: linear-gradient(#a8a8a8, #a8a8a8) 2px 100% / 245px 1px no-repeat; }
  .expand svg { width: 12px; height: 18px; }
  .entity-info { display: flex; gap: 2px; padding: 8px 11px 0 7px; }
  .face-card { width: 35px; height: 60px; padding: 12px 0 13px; border: 1px solid #999; flex: none; }
  .face { width: 100%; height: 100%; }
  .fields { flex: 1; display: grid; grid-template-columns: 1fr 118px; gap: 5px; align-items: center; height: 51px; }
  .fields label { text-align: right; white-space: nowrap; font: 12px/14px "Noto Sans CJK KR", sans-serif; }
  .combo { display: grid; grid-template-columns: 1fr 20px; height: 23px; border: 2px solid; border-color: #777 #999 #999 #777; background: #fff; }
  .combo select { grid-area: 1 / 1 / 2 / 3; appearance: none; width: 100%; border: 0; margin: 0; padding: 0 0 0 2px; background: none; color: #111; font: 12px/14px "Noto Sans", "Noto Sans CJK KR", sans-serif; }
  .combo.tall select { font-size: 11px; }
  .cap { grid-area: 1 / 2; display: grid; place-items: center; background: #f1f1f1; border-right: 1px solid #777; border-bottom: 1px solid #777; pointer-events: none; }
  .cap .tri { border-width: 5px 5px 0; }
  .sunken { height: 23px; width: 100%; min-width: 0; padding: 0 2px; border: 2px solid; border-color: #777 #fff #fff #777; background: #f1f1f1; color: #111; font: 12px/14px "Noto Sans", "Noto Sans CJK KR", sans-serif; }
  .sunken::placeholder { color: #888; }

  .materials { flex: 1; min-height: 0; display: flex; flex-direction: column; font: 11px/14px "Noto Sans CJK KR", sans-serif; }
  .materials > * { flex: none; }
  .material-top { display: flex; gap: 3px; padding: 3px 2px 2px; height: 94px; border-bottom: 1px solid #a0a0a0; }
  .preview { width: 77px; height: 87px; padding: 5px 1px; border: 1px solid #999; flex: none; }
  .name { width: 161px; flex: none; }
  .stack { flex: 1; display: flex; flex-direction: column; align-items: center; gap: 10px; padding-top: 4px; }
  .small { width: 22px; height: 22px; }
  .stack .reset { width: 26px; height: 26px; margin-top: -4px; }
  .tabs { display: flex; align-items: flex-end; height: 30px; }
  .tab { height: 20px; padding: 0 12px 0 6px; border-right: 2px solid #888; border-top: 1px solid #fff; }
  .tab.current { height: 22px; padding: 0 21px 4px 7px; }
  .dropper { margin: 0 4px 4px auto; }
  .browse { display: flex; align-items: flex-start; height: 36px; padding: 6px 3px 0 6px; border-bottom: 1px solid #a0a0a0; }
  .nav { width: 20px; height: 20px; margin-right: 8px; }
  .combo.tall { flex: 1; height: 26px; margin-left: -3px; margin-right: 6px; }
  .combo.tall + .nav { margin-right: 0; }
  .lined { background: linear-gradient(#000, #000) 4px 20px / 125px 1px no-repeat #fff; }
  .list { flex: 1 1 0; min-height: 0; display: flex; justify-content: space-between; overflow: hidden; background: #fff; }
  .materials > .list { flex: 1 1 0; }
  .materials > .list.short { flex: 0 0 33px; }
  .grid { display: grid; grid-template-columns: repeat(3, 62px); grid-auto-rows: 62px; gap: 2px; padding: 2px 3px; }
  .swatch { border: 1px solid #999; padding: 1px; background: var(--fill) content-box; }
  .folder { border: 1px solid #999; }
  .split-bar { height: 10px; border-bottom: 1px solid #a8a8a8; background: linear-gradient(#777, #777) 0 3px / 100% 2px no-repeat; }
  .second { height: 22px; padding: 2px 4px; background: #e5e4e5; border-bottom: 1px solid #aaa; }
  .scroll { width: 20px; flex: none; display: flex; flex-direction: column; background: #f1f1f1; }
  .scroll-btn { height: 21px; display: grid; place-items: center; }
  .scroll-btn.last { margin-top: auto; }
  .thumb { height: 21px; flex: none; background: #cdcdcd; }
  .chevron { width: 11px; height: 8px; }

  footer { display: flex; align-items: center; height: 27px; padding: 6px 0 0 6px; background: #f1f1f1; overflow: hidden; }
  .status-icon { width: 20px; margin-right: 15px; }
  .status-icon svg { width: 20px; height: 20px; }
  .rule { width: 1px; height: 15px; background: #888; margin-left: -4px; }
  footer p { flex: 1; padding-left: 11px; font: 17px/20px "Noto Sans CJK KR", sans-serif; }
  footer label { padding: 0 10px 0 8px; font: 17px/20px "Noto Sans CJK KR", sans-serif; }
  footer input { align-self: flex-start; width: 249px; height: 30px; margin: -3px 5px 0 0; padding: 0 3px; border: 1px solid #aab8cc; background: #fff; color: #111; font: 15px/20px "Noto Sans", sans-serif; }
</style>
